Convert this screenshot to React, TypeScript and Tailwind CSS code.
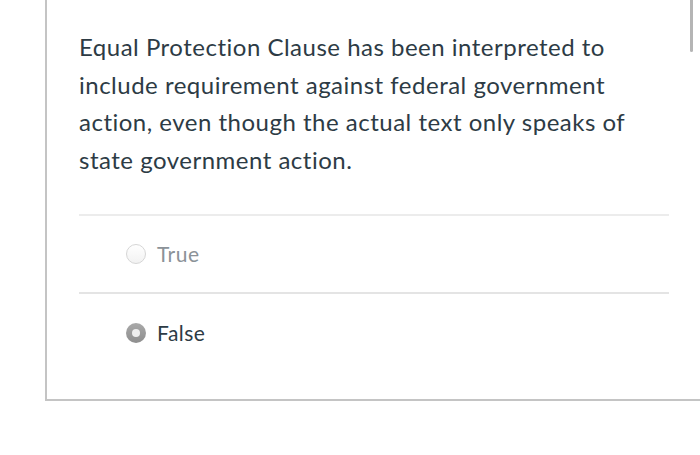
export default function App() {
  return (
    <div className="relative h-[455px] w-[700px] overflow-hidden bg-white" style={{ fontFamily: 'Lato, "Open Sans", sans-serif' }}>
      <div className="ml-[45px] h-[401px] border-b-2 border-l-2 border-[#c4c4c4] pl-[32px] pr-[31px] pt-[28px]">
        <p className="whitespace-nowrap text-[24px] leading-[37.5px] tracking-[0.5px] text-[#2d3b45]">
          Equal Protection Clause has been interpreted to
          <br />
          include requirement against federal government
          <br />
          action, even though the actual text only speaks of
          <br />
          state government action.
        </p>
        <div className="mt-[36px] border-t-2 border-[#ececec]">
          <label className="flex h-[76px] items-center pl-[47px]">
            <span className="h-[20px] w-[20px] rounded-full border border-[#d6d6d6] bg-gradient-to-b from-white to-[#f2f2f2]" />
            <span className="ml-[11px] text-[21px] tracking-[0.5px] text-[#8b9298]">True</span>
          </label>
        </div>
        <div className="border-t-2 border-[#e4e4e4]">
          <label className="flex h-[78px] items-center pl-[47px]">
            <span className="flex h-[20px] w-[20px] items-center justify-center rounded-full bg-gradient-to-b from-[#a9a9a9] to-[#8e8e8e]">
              <span className="h-[8px] w-[8px] rounded-full bg-[#eeeeee]" />
            </span>
            <span className="ml-[11px] text-[21px] tracking-[0.5px] text-[#2d3b45]">False</span>
          </label>
        </div>
      </div>
      <div className="absolute right-[7px] top-0 h-[52px] w-[3px] rounded-b-full bg-[#b5b5b5]" />
    </div>
  );
}
